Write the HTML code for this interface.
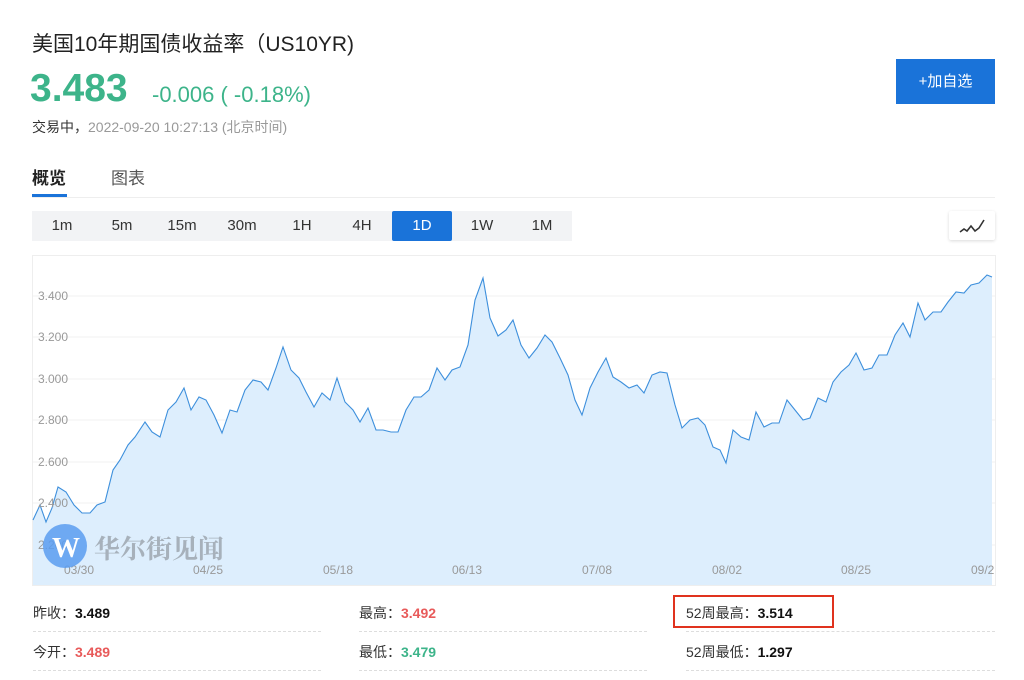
<!DOCTYPE html>
<html><head><meta charset="utf-8"><style>
*{margin:0;padding:0;box-sizing:border-box}
body{width:1024px;height:680px;background:#fff;font-family:"Liberation Sans","Noto Sans CJK SC",sans-serif;position:relative;overflow:hidden;color:#222}
.a{position:absolute;white-space:nowrap}
.tabs span{display:inline-block;width:60px;height:30px;line-height:30px;text-align:center;font-size:15px;color:#333;background:#f2f3f5}
.tabs span.on{background:#1a73d9;color:#fff;border-radius:2px}
.lbl{font-size:14px;color:#333}
.v{font-weight:bold;font-size:14px}
.dash{position:absolute;height:0;border-top:1px dashed #ddd}
</style></head><body>
<div class="a" style="left:32px;top:28px;font-size:21px;color:#222">美国10年期国债收益率（US10YR)</div>
<div class="a" style="left:30px;top:67px;font-size:39px;font-weight:bold;color:#3db48a">3.483</div>
<div class="a" style="left:152px;top:82px;font-size:22px;color:#3db48a">-0.006 ( -0.18%)</div>
<div class="a" style="left:32px;top:117px;font-size:14px;color:#333;font-weight:normal">交易中，<span style="color:#999">2022-09-20 10:27:13 (北京时间)</span></div>
<div class="a" style="left:896px;top:59px;width:99px;height:45px;background:#1a73d9;color:#fff;font-size:15px;line-height:45px;text-align:center">+加自选</div>
<div class="a" style="left:32px;top:164px;font-size:17px;font-weight:bold;color:#222">概览</div>
<div class="a" style="left:111px;top:164px;font-size:17px;color:#555">图表</div>
<div class="a" style="left:32px;top:194px;width:35px;height:3px;background:#1a73d9"></div>
<div class="a" style="left:32px;top:197px;width:963px;height:1px;background:#eee"></div>
<div class="a tabs" style="left:32px;top:211px;display:flex;background:#f2f3f5"><span>1m</span><span>5m</span><span>15m</span><span>30m</span><span>1H</span><span>4H</span><span class="on">1D</span><span>1W</span><span>1M</span></div>
<div class="a" style="left:949px;top:211px;width:46px;height:29px;background:#fff;box-shadow:0 1px 3px rgba(0,0,0,.15);border-radius:2px">
<svg width="46" height="29"><polyline points="11,21 15,18 18,20 22,15 26,20 30,17 35,9" fill="none" stroke="#333" stroke-width="1.6"/></svg></div>
<svg class="a" style="left:0;top:0" width="1024" height="600">
<rect x="32.5" y="255.5" width="963" height="330" fill="none" stroke="#eee"/>
<g stroke="#f0f0f0"><line x1="33" x2="995" y1="296" y2="296"/><line x1="33" x2="995" y1="337" y2="337"/><line x1="33" x2="995" y1="379" y2="379"/><line x1="33" x2="995" y1="420" y2="420"/><line x1="33" x2="995" y1="462" y2="462"/><line x1="33" x2="995" y1="503" y2="503"/><line x1="33" x2="995" y1="545" y2="545"/></g>
<polygon fill="#ddeefd" points="33,585 33,520 40,505 46,522 52,508 58,487 66,492 74,505 82,513 90,513 97,505 105,502 113,470 120,460 128,445 135,437 145,422 152,432 160,437 168,410 176,402 184,388 191,410 199,397 206,400 214,415 222,433 230,410 237,412 245,390 253,380 261,382 268,390 276,368 283,347 291,370 299,378 306,392 314,407 322,393 330,400 337,378 345,402 353,410 360,422 368,408 376,430 383,430 391,432 398,432 406,410 414,397 421,397 429,390 437,368 445,380 452,370 460,367 468,345 475,300 483,278 490,318 498,336 506,330 513,320 521,345 529,358 537,348 545,335 552,342 560,358 568,375 575,400 582,415 590,388 598,372 606,358 613,377 621,382 629,388 637,385 644,393 652,375 660,372 667,373 675,405 682,428 690,420 698,418 705,425 713,447 720,450 726,463 733,430 741,437 749,440 756,412 764,427 772,423 779,423 787,400 795,410 803,420 810,418 818,398 826,402 833,382 841,372 849,365 856,353 864,370 872,368 879,355 887,355 895,335 903,323 910,337 918,303 925,320 933,312 941,312 948,302 956,292 964,293 971,285 979,283 987,275 992,277 992,585"/>
<polyline fill="none" stroke="#3d8fdc" stroke-width="1.1" points="33,520 40,505 46,522 52,508 58,487 66,492 74,505 82,513 90,513 97,505 105,502 113,470 120,460 128,445 135,437 145,422 152,432 160,437 168,410 176,402 184,388 191,410 199,397 206,400 214,415 222,433 230,410 237,412 245,390 253,380 261,382 268,390 276,368 283,347 291,370 299,378 306,392 314,407 322,393 330,400 337,378 345,402 353,410 360,422 368,408 376,430 383,430 391,432 398,432 406,410 414,397 421,397 429,390 437,368 445,380 452,370 460,367 468,345 475,300 483,278 490,318 498,336 506,330 513,320 521,345 529,358 537,348 545,335 552,342 560,358 568,375 575,400 582,415 590,388 598,372 606,358 613,377 621,382 629,388 637,385 644,393 652,375 660,372 667,373 675,405 682,428 690,420 698,418 705,425 713,447 720,450 726,463 733,430 741,437 749,440 756,412 764,427 772,423 779,423 787,400 795,410 803,420 810,418 818,398 826,402 833,382 841,372 849,365 856,353 864,370 872,368 879,355 887,355 895,335 903,323 910,337 918,303 925,320 933,312 941,312 948,302 956,292 964,293 971,285 979,283 987,275 992,277"/>
<g font-size="12" fill="#999" font-family="Liberation Sans,sans-serif"><text x="38" y="300">3.400</text><text x="38" y="341">3.200</text><text x="38" y="383">3.000</text><text x="38" y="424">2.800</text><text x="38" y="466">2.600</text><text x="38" y="507">2.400</text><text x="38" y="549">2.200</text>
<text x="64" y="574">03/30</text><text x="193" y="574">04/25</text><text x="323" y="574">05/18</text><text x="452" y="574">06/13</text><text x="582" y="574">07/08</text><text x="712" y="574">08/02</text><text x="841" y="574">08/25</text><text x="971" y="574">09/2</text></g>
<circle cx="65" cy="546" r="22" fill="#5b9cf0" opacity=".85"/>
<text x="52" y="557" font-size="28" font-weight="bold" fill="#fff" font-family="Liberation Serif,serif">W</text>
<text x="94" y="558" font-size="26" font-weight="bold" fill="#9aa3ab" opacity=".8" font-family="Noto Serif CJK SC,serif">华尔街见闻</text>
</svg>
<div class="a lbl" style="left:33px;top:603px">昨收：<span class="v" style="color:#111">3.489</span></div>
<div class="a lbl" style="left:33px;top:642px">今开：<span class="v" style="color:#e85a5a">3.489</span></div>
<div class="a lbl" style="left:359px;top:603px">最高：<span class="v" style="color:#e85a5a">3.492</span></div>
<div class="a lbl" style="left:359px;top:642px">最低：<span class="v" style="color:#3db48a">3.479</span></div>
<div class="a lbl" style="left:686px;top:603px">52周最高：<span class="v" style="color:#111">3.514</span></div>
<div class="a lbl" style="left:686px;top:642px">52周最低：<span class="v" style="color:#111">1.297</span></div>
<div class="a" style="left:673px;top:595px;width:161px;height:33px;border:2px solid #e0321e"></div>
<div class="dash" style="left:33px;top:631px;width:288px"></div>
<div class="dash" style="left:359px;top:631px;width:288px"></div>
<div class="dash" style="left:686px;top:631px;width:309px"></div>
<div class="dash" style="left:33px;top:670px;width:288px"></div>
<div class="dash" style="left:359px;top:670px;width:288px"></div>
<div class="dash" style="left:686px;top:670px;width:309px"></div>
</body></html>
